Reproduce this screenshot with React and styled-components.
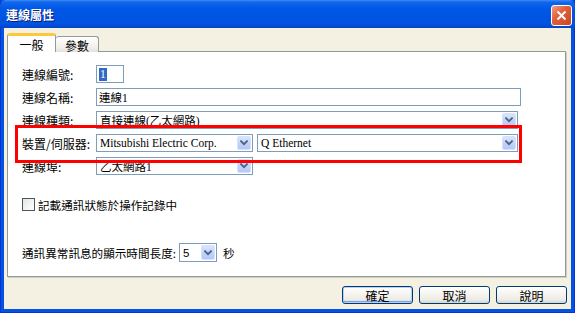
import React from 'react';
import styled, { createGlobalStyle, css } from 'styled-components';

const GlobalStyle = createGlobalStyle`
  html, body {
    margin: 0;
    padding: 0;
    overflow: hidden;
  }
  body {
    font-family: "Noto Sans CJK TC", "Liberation Sans", sans-serif;
    font-size: 12px;
    color: #000;
  }
`;

const Window = styled.div`
  width: 575px;
  height: 313px;
  display: flex;
  flex-direction: column;
  background: #0452E0;
  box-shadow: inset 1px 0 0 #0831D9, inset -1px 0 0 #0831D9, inset 0 -1px 0 #0831D9;
`;

const TitleBar = styled.div`
  height: 28px;
  flex-shrink: 0;
  display: flex;
  align-items: center;
  justify-content: space-between;
  padding: 0 3px 0 6px;
  background: linear-gradient(to bottom, #3D8DF5 0%, #1266EC 8%, #0058E6 30%, #0054E3 60%, #0152E0 85%, #0345C8 100%);
  border-radius: 6px 6px 0 0;
`;

const Title = styled.span`
  color: #fff;
  font-weight: bold;
  font-size: 12px;
  text-shadow: 1px 1px 0 #0A1E7A;
`;

const CloseButton = styled.div`
  width: 19px;
  height: 19px;
  margin-top: 2px;
  border: 1px solid #fff;
  border-radius: 3px;
  background: linear-gradient(135deg, #F0A088 0%, #E0603C 40%, #CC4420 100%);
  display: flex;
  align-items: center;
  justify-content: center;
`;

const Body = styled.div`
  flex: 1;
  margin: 0 4px 4px 4px;
  padding: 5px 4px 5px 3px;
  background: #F4F1E3;
  display: flex;
  flex-direction: column;
`;

const Tabs = styled.div`
  display: flex;
  align-items: flex-end;
  height: 19px;
  margin-bottom: -1px;
  position: relative;
  z-index: 1;
`;

const Tab = styled.div`
  box-sizing: border-box;
  display: flex;
  align-items: center;
  justify-content: center;
  border: 1px solid #919B9C;
  border-bottom: none;
  border-radius: 3px 3px 0 0;
  font-size: 12px;
  ${(p) =>
    p.$active
      ? css`
          width: 49px;
          height: 19px;
          background: #fff;
          border-top: 3px solid #FFC83C;
          padding-top: 1px;
        `
      : css`
          width: 43px;
          height: 16px;
          background: linear-gradient(to bottom, #fff, #F0EFEA 70%, #E4E2DA);
          border-left: none;
          padding-top: 2px;
        `}
`;

const Panel = styled.div`
  flex: 1;
  position: relative;
  margin-right: 1px;
  background: #fff;
  border: 1px solid #919B9C;
  box-shadow: 1px 1px 0 #D0CEBF;
  padding: 13px 0 0 14px;
`;

const Row = styled.div`
  display: flex;
  align-items: center;
  height: 18px;
  & + & {
    margin-top: 5px;
  }
`;

const Label = styled.div`
  width: 74px;
  flex-shrink: 0;
  font-size: 12px;
  white-space: nowrap;
`;

const fieldBase = css`
  box-sizing: border-box;
  height: ${(p) => p.$h || 18}px;
  width: ${(p) => p.$w}px;
  border: 1px solid #7F9DB9;
  background: #fff;
  display: flex;
  align-items: center;
  font-family: "Liberation Serif", "Noto Sans CJK TC", serif;
  font-size: 11.5px;
  white-space: nowrap;
  overflow: hidden;
`;

const TextBox = styled.div`
  ${fieldBase}
  padding-left: 2px;
`;

const Selected = styled.span`
  background: #316AC5;
  color: #fff;
  padding: 0 1px;
  line-height: 13px;
`;

const SelectBox = styled.div`
  ${fieldBase}
  padding: 1px;
  margin-left: ${(p) => p.$gap || 0}px;
`;

const SelectText = styled.span`
  flex: 1;
  padding-left: 2px;
  font-family: ${(p) => (p.$sans ? '"Liberation Sans", sans-serif' : 'inherit')};
`;

const ArrowButton = styled.div`
  width: 14px;
  align-self: stretch;
  box-sizing: border-box;
  border: 1px solid #D6E2FC;
  border-radius: 2px;
  background: linear-gradient(to bottom, #D9E5FD 0%, #C3D4FA 50%, #B5C8F6 100%);
  display: flex;
  align-items: center;
  justify-content: center;
`;

const CheckRow = styled.div`
  display: flex;
  align-items: center;
  margin-top: 23px;
  height: 13px;
  gap: 3px;
  font-size: 11.6px;
`;

const CheckBox = styled.div`
  width: 13px;
  height: 13px;
  box-sizing: border-box;
  border: 1px solid #4A5566;
  background: linear-gradient(135deg, #E6E6DE, #fff);
`;

const TimeoutRow = styled.div`
  display: flex;
  align-items: center;
  margin-top: 32px;
  height: 19px;
  font-size: 11.6px;
  gap: 3px;
`;

const Unit = styled.span`
  margin-left: 3px;
`;

const Highlight = styled.div`
  position: absolute;
  left: 7px;
  top: 73px;
  width: 507px;
  height: 38px;
  box-sizing: border-box;
  border: 3px solid #FF0000;
  pointer-events: none;
`;

const ButtonBar = styled.div`
  display: flex;
  justify-content: flex-end;
  gap: 6px;
  margin-top: 9px;
  height: 18px;
`;

const Button = styled.div`
  width: 71px;
  box-sizing: border-box;
  border: 1px solid #003C74;
  border-radius: 3px;
  background: linear-gradient(to bottom, #FFFFFF 0%, #F6F5F1 40%, #ECEBE5 80%, #D8D4C8 100%);
  display: flex;
  align-items: center;
  justify-content: center;
  font-size: 12px;
  ${(p) =>
    p.$default &&
    css`
      box-shadow: inset 0 0 0 1px #B8D0F6, inset 0 -1px 0 1px #7DA2E8;
    `}
`;

const Chevron = () => (
  <svg width="8" height="6" viewBox="0 0 8 6">
    <path d="M1 1.2 L4 4.2 L7 1.2" stroke="#4D6185" strokeWidth="1.8" fill="none" strokeLinecap="square" />
  </svg>
);

const Select = ({ w, h, gap, sans, children }) => (
  <SelectBox $w={w} $h={h} $gap={gap}>
    <SelectText $sans={sans}>{children}</SelectText>
    <ArrowButton>
      <Chevron />
    </ArrowButton>
  </SelectBox>
);

export default function App() {
  return (
    <>
      <GlobalStyle />
      <Window>
        <TitleBar>
          <Title>連線屬性</Title>
          <CloseButton>
            <svg width="11" height="11" viewBox="0 0 11 11">
              <path d="M1.5 1.5 L9.5 9.5 M9.5 1.5 L1.5 9.5" stroke="#fff" strokeWidth="2" />
            </svg>
          </CloseButton>
        </TitleBar>
        <Body>
          <Tabs>
            <Tab $active>一般</Tab>
            <Tab>參數</Tab>
          </Tabs>
          <Panel>
            <Row>
              <Label>連線編號:</Label>
              <TextBox $w={28}>
                <Selected>1</Selected>
              </TextBox>
            </Row>
            <Row>
              <Label>連線名稱:</Label>
              <TextBox $w={425}>連線1</TextBox>
            </Row>
            <Row>
              <Label>連線種類:</Label>
              <Select w={422}>直接連線(乙太網路)</Select>
            </Row>
            <Row>
              <Label>裝置/伺服器:</Label>
              <Select w={157}>Mitsubishi Electric Corp.</Select>
              <Select w={261} gap={4}>Q Ethernet</Select>
            </Row>
            <Row>
              <Label>連線埠:</Label>
              <Select w={157}>乙太網路1</Select>
            </Row>
            <CheckRow>
              <CheckBox />
              <span>記載通訊狀態於操作記錄中</span>
            </CheckRow>
            <TimeoutRow>
              <span>通訊異常訊息的顯示時間長度:</span>
              <Select w={38} h={19} sans>5</Select>
              <Unit>秒</Unit>
            </TimeoutRow>
            <Highlight />
          </Panel>
          <ButtonBar>
            <Button $default>確定</Button>
            <Button>取消</Button>
            <Button>說明</Button>
          </ButtonBar>
        </Body>
      </Window>
    </>
  );
}
